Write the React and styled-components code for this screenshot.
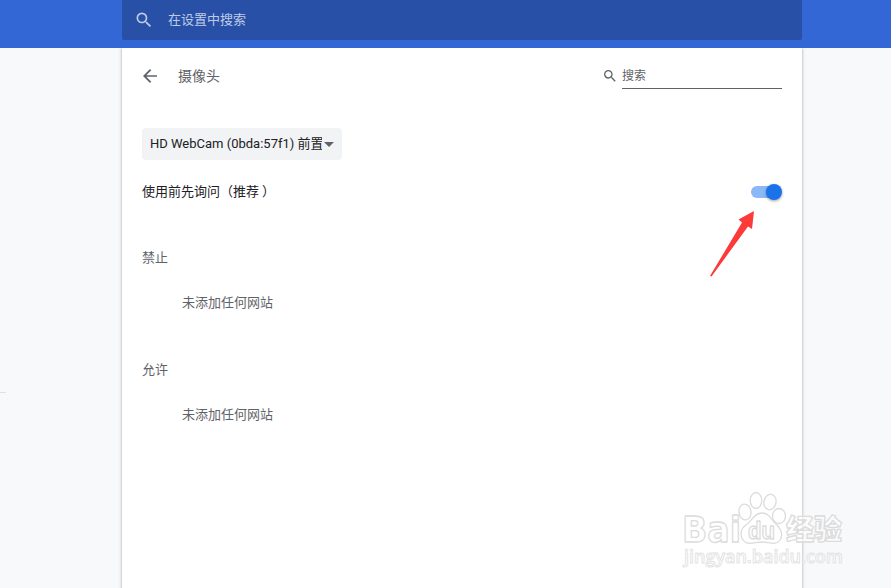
import React from 'react';
import styled, { createGlobalStyle } from 'styled-components';

const blue = '#3367d6';
const textPrimary = '#202124';
const textSecondary = '#5f6368';
const systemFont = "Roboto, 'Noto Sans CJK SC', sans-serif";

const GlobalStyle = createGlobalStyle`
  * {
    box-sizing: border-box;
  }

  body {
    margin: 0;
    background-color: #f8f9fa;
    font-family: ${systemFont};
    font-size: 13px;
    color: ${textPrimary};
    overflow: hidden;
  }
`;

const Page = styled.div`
  position: relative;
  display: flex;
  flex-direction: column;
  height: 588px;
  overflow: hidden;
`;

const Toolbar = styled.header`
  position: relative;
  z-index: 1;
  display: flex;
  flex: none;
  align-items: flex-start;
  height: 48px;
  padding: 0 89px 0 122px;
  background-color: ${blue};
`;

const SettingsSearch = styled.div`
  display: flex;
  align-items: center;
  flex: 1;
  height: 40px;
  padding: 0 12px;
  border-radius: 0 0 2px 2px;
  background-color: #2850a7;
  color: #bfcbe5;
`;

const SettingsPlaceholder = styled.span`
  margin-left: 14px;
  line-height: 20px;
`;

const Body = styled.div`
  display: flex;
  flex: 1;
  padding-right: 89px;
`;

const Sidebar = styled.nav`
  width: 122px;
  padding-top: 344px;
`;

const Separator = styled.div`
  width: 6px;
  height: 1px;
  background-color: #e0e1e3;
`;

const Card = styled.main`
  flex: 1;
  padding: 8px 20px 0;
  background-color: #fff;
  box-shadow: 0 1px 2px rgba(60, 64, 67, 0.3), 0 1px 3px 1px rgba(60, 64, 67, 0.15);
`;

const Header = styled.div`
  display: flex;
  align-items: center;
  height: 40px;
`;

const Title = styled.h1`
  flex: 1;
  margin: 0 0 0 20px;
  font-size: 14px;
  font-weight: 400;
  line-height: 20px;
  color: ${textSecondary};
`;

const SearchField = styled.div`
  display: flex;
  align-items: center;
  height: 26px;
  color: ${textSecondary};
`;

const SearchInput = styled.div`
  width: 160px;
  height: 26px;
  margin-left: 4px;
  padding-top: 1px;
  border-bottom: 1px solid ${textSecondary};
  font-size: 12px;
  line-height: 25px;
`;

const Select = styled.div`
  display: flex;
  align-items: center;
  width: 200px;
  height: 32px;
  margin-top: 32px;
  padding: 0 8px;
  border-radius: 4px;
  background-color: #f1f3f4;
`;

const SelectValue = styled.span`
  flex: 1;
  overflow: hidden;
  white-space: nowrap;
  line-height: 32px;
`;

const Caret = styled.span`
  margin: 1px 0 0 2px;
  border: 5px solid transparent;
  border-top-color: ${textSecondary};
  border-bottom: 0;
`;

const SettingRow = styled.div`
  display: flex;
  align-items: center;
  justify-content: space-between;
  height: 64px;
`;

const SettingLabel = styled.span`
  padding-bottom: 3px;
`;

const ClosingParen = styled.span`
  margin-left: 3px;
`;

const Toggle = styled.div`
  display: flex;
  align-items: center;
  justify-content: flex-end;
  width: 31px;
  height: 12px;
  border-radius: 8px;
  background: linear-gradient(to right, #8cb8f7 24px, transparent 24px);
`;

const Knob = styled.span`
  width: 16px;
  height: 16px;
  border-radius: 50%;
  background-color: #1a73e8;
  box-shadow: 0 1px 3px rgba(0, 0, 0, 0.4);
`;

const Section = styled.section`
  height: 112px;
  padding-top: 24px;
  color: ${textSecondary};
`;

const SectionTitle = styled.h2`
  margin: 0;
  font-size: 13px;
  font-weight: 400;
  line-height: 20px;
`;

const Empty = styled.div`
  margin-top: 25px;
  padding-left: 40px;
  line-height: 20px;
`;

const Arrow = styled.svg`
  position: absolute;
  left: 700px;
  top: 200px;
`;

const Watermark = styled.svg`
  position: absolute;
  left: 675px;
  top: 485px;
`;

const SearchIcon = ({ size }) => (
  <svg width={size} height={size} viewBox="0 0 24 24" fill="currentColor">
    <path d="M15.5 14h-.79l-.28-.27A6.471 6.471 0 0 0 16 9.5 6.5 6.5 0 1 0 9.5 16c1.61 0 3.09-.59 4.23-1.57l.27.28v.79l5 4.99L20.49 19l-4.99-5zm-6 0C7.01 14 5 11.99 5 9.5S7.01 5 9.5 5 14 7.01 14 9.5 11.99 14 9.5 14z" />
  </svg>
);

const BackIcon = () => (
  <svg width="16" height="16" viewBox="2.8 2.8 18.4 18.4" fill={textSecondary}>
    <path d="M20 11H7.83l5.59-5.59L12 4l-8 8 8 8 1.41-1.41L7.83 13H20v-2z" />
  </svg>
);

const SiteList = ({ title }) => (
  <Section>
    <SectionTitle>{title}</SectionTitle>
    <Empty>未添加任何网站</Empty>
  </Section>
);

const Brand = () => (
  <Watermark width="180" height="95" fill="#fff" fillOpacity="0.6" stroke="#dcdcdc" strokeWidth="1.3" strokeLinejoin="round">
    <text x="7" y="57" fontFamily="'DejaVu Sans', sans-serif" fontWeight="700" fontSize="36" textLength="59" lengthAdjust="spacingAndGlyphs">Bai</text>
    <ellipse cx="70" cy="27" rx="6" ry="8" transform="rotate(-8 70 27)" />
    <ellipse cx="81" cy="15.5" rx="5.8" ry="8" />
    <ellipse cx="95" cy="17" rx="6" ry="7.8" transform="rotate(12 95 17)" />
    <ellipse cx="104" cy="31" rx="6.5" ry="7.5" />
    <path d="M87 28C79 28 77 36 71 40C65 44 65 51 68 55C72 61 80 57 87 57C94 57 101 61 105 55C109 49 106 44 101 39C96 35 95 28 87 28Z" />
    <text x="73" y="54" fontFamily="'Liberation Sans', sans-serif" fontWeight="700" fontSize="23" textLength="27" lengthAdjust="spacingAndGlyphs">du</text>
    <text x="111" y="55" fontFamily="'Noto Sans CJK SC', sans-serif" fontWeight="900" fontSize="28" textLength="56" lengthAdjust="spacingAndGlyphs">经验</text>
    <text x="9" y="78" fontFamily="'Open Sans', sans-serif" fontWeight="600" fontSize="18" strokeWidth="0.9" stroke="#e2e2e2" textLength="159" lengthAdjust="spacingAndGlyphs">jingyan.baidu.com</text>
  </Watermark>
);

const App = () => (
  <Page>
    <GlobalStyle />
    <Toolbar>
      <SettingsSearch>
        <SearchIcon size={20} />
        <SettingsPlaceholder>在设置中搜索</SettingsPlaceholder>
      </SettingsSearch>
    </Toolbar>
    <Body>
      <Sidebar>
        <Separator />
      </Sidebar>
      <Card>
        <Header>
          <BackIcon />
          <Title>摄像头</Title>
          <SearchField>
            <SearchIcon size={16} />
            <SearchInput>搜索</SearchInput>
          </SearchField>
        </Header>
        <Select>
          <SelectValue>HD WebCam (0bda:57f1) 前置</SelectValue>
          <Caret />
        </Select>
        <SettingRow>
          <SettingLabel>
            使用前先询问（推荐<ClosingParen>）</ClosingParen>
          </SettingLabel>
          <Toggle>
            <Knob />
          </Toggle>
        </SettingRow>
        <SiteList title="禁止" />
        <SiteList title="允许" />
      </Card>
    </Body>
    <Arrow width="60" height="80" fill="#fc3b39">
      <path d="M54 11L38.5 19.5L42 22.5L10 76L11.5 76.5L48 26.5L52 29Z" />
    </Arrow>
    <Brand />
  </Page>
);

export default App;
